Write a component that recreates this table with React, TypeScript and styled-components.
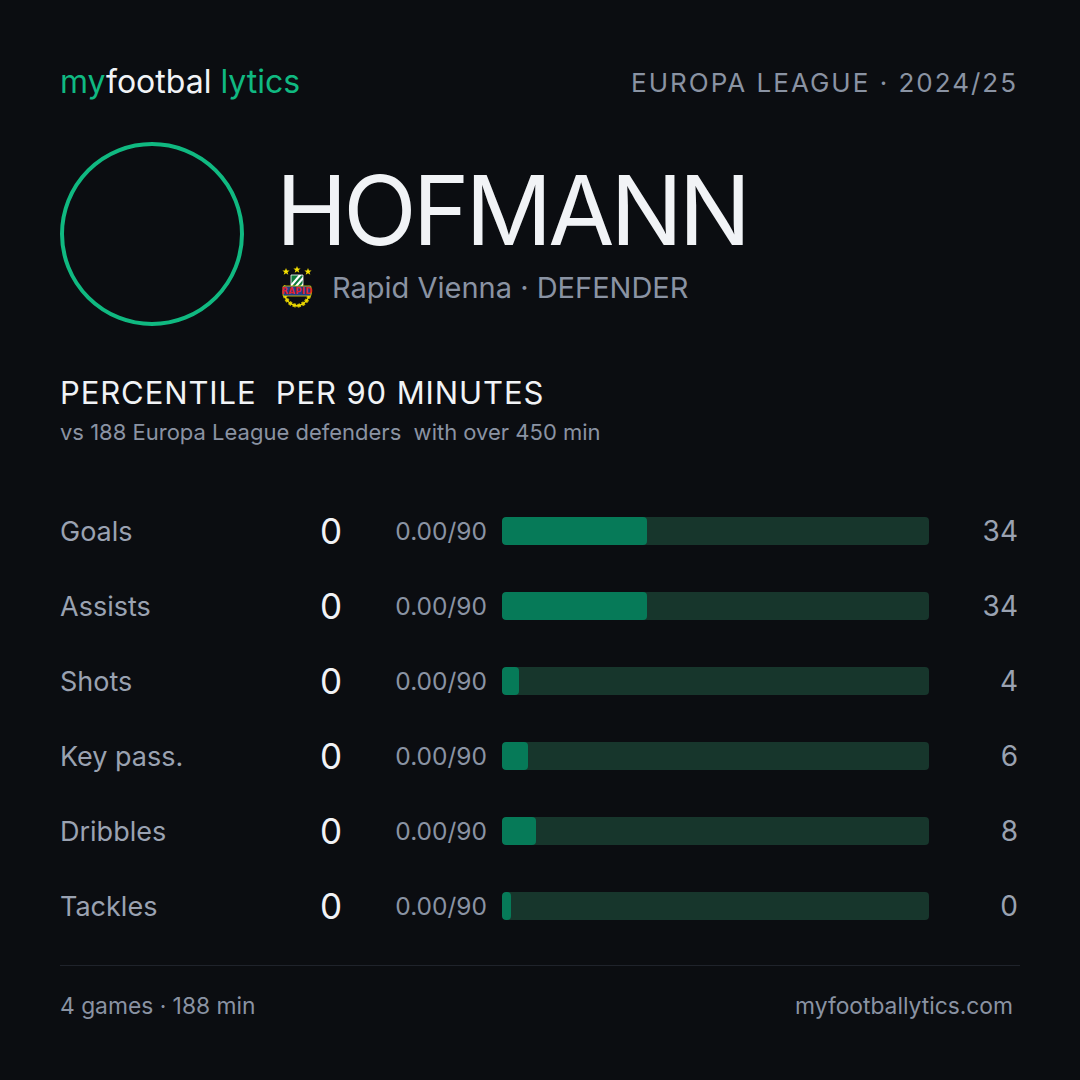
import React from "react";
import styled, { createGlobalStyle } from "styled-components";

const GlobalStyle = createGlobalStyle`
  html, body { margin: 0; padding: 0; background: #0b0d11; }
  body { font-family: Inter, "Noto Sans", sans-serif; }
  * { box-sizing: border-box; }
`;

const Page = styled.div`
  width: 1080px;
  height: 1080px;
  background: #0b0d11;
  padding: 64px 60px 0 60px;
  display: flex;
  flex-direction: column;
  color: #f1f3f6;
`;

const Header = styled.header`
  display: flex;
  justify-content: space-between;
  align-items: center;
  height: 36px;
`;

const Logo = styled.div`
  font-size: 32px;
  letter-spacing: 0;
  line-height: 36px;
  color: #f1f3f6;
`;

const Green = styled.span`
  color: #10b981;
`;

const Competition = styled.div`
  font-size: 26px;
  letter-spacing: 2px;
  color: #8a93a3;
  padding-right: 2px;
`;

const Hero = styled.section`
  display: flex;
  align-items: center;
  gap: 32px;
  margin-top: 42px;
`;

const Avatar = styled.div`
  width: 184px;
  height: 184px;
  border-radius: 50%;
  border: 4px solid #10b981;
  flex-shrink: 0;
`;

const HeroText = styled.div`
  display: flex;
  flex-direction: column;
`;

const Name = styled.h1`
  margin: 0;
  font-size: 96px;
  font-weight: 400;
  letter-spacing: -4px;
  line-height: 100px;
  color: #f1f3f6;
`;

const Club = styled.div`
  display: flex;
  align-items: center;
  gap: 18px;
  margin-top: 6px;
  font-size: 29px;
  color: #8a93a3;
  padding-left: 4px;
`;

const SectionTitle = styled.h2`
  margin: 49px 0 0 0;
  font-size: 31px;
  font-weight: 400;
  letter-spacing: 0.9px;
  color: #f1f3f6;
  line-height: 36px;
`;

const SubTitle = styled.div`
  margin-top: 7px;
  font-size: 22px;
  color: #8a93a3;
  line-height: 28px;
`;

const Rows = styled.div`
  display: flex;
  flex-direction: column;
  gap: 47px;
  margin-top: 64px;
`;

const Row = styled.div`
  display: grid;
  grid-template-columns: 200px 82px 160px 427px 1fr;
  align-items: center;
  height: 28px;
`;

const Label = styled.div`
  font-size: 27px;
  color: #9aa2b1;
`;

const Value = styled.div`
  font-size: 35px;
  color: #f1f3f6;
  text-align: right;
`;

const Rate = styled.div`
  font-size: 24.5px;
  color: #8a93a3;
  text-align: right;
  padding-right: 15px;
`;

const Track = styled.div`
  height: 28px;
  border-radius: 4px;
  background: #17362c;
  overflow: hidden;
  display: flex;
`;

const Fill = styled.div`
  height: 100%;
  border-radius: 4px;
  background: #067a58;
`;

const Pct = styled.div`
  font-size: 28px;
  color: #9aa2b1;
  text-align: right;
  padding-right: 2px;
`;

const Divider = styled.hr`
  margin: 52px 0 0 0;
  border: none;
  height: 1px;
  background: #1f232b;
`;

const Footer = styled.footer`
  display: flex;
  justify-content: space-between;
  align-items: center;
  margin-top: 26px;
  font-size: 22.8px;
  color: #8a93a3;
  padding-right: 7px;
`;

const Badge = () => (
  <svg width="34" height="42" viewBox="0 0 34 42">
    <g fill="#f5e000">
      <polygon points="6,2 7,4.6 9.6,4.6 7.5,6.2 8.3,8.8 6,7.2 3.7,8.8 4.5,6.2 2.4,4.6 5,4.6" />
      <polygon points="17,0 18,2.6 20.6,2.6 18.5,4.2 19.3,6.8 17,5.2 14.7,6.8 15.5,4.2 13.4,2.6 16,2.6" />
      <polygon points="28,2 29,4.6 31.6,4.6 29.5,6.2 30.3,8.8 28,7.2 25.7,8.8 26.5,6.2 24.4,4.6 27,4.6" />
    </g>
    <path d="M6 20 C2 28 6 38 17 40 C28 38 32 28 28 20" fill="none" stroke="#c9b800" strokeWidth="4" strokeDasharray="3 1.5" />
    <path d="M6 20 C2 28 6 38 17 40 C28 38 32 28 28 20" fill="none" stroke="#f5e000" strokeWidth="1.5" />
    <defs>
      <clipPath id="shield">
        <path d="M11 9 H23 V18 C23 22 20 24 17 25 C14 24 11 22 11 18 Z" />
      </clipPath>
    </defs>
    <g clipPath="url(#shield)">
      <rect x="10" y="8" width="14" height="18" fill="#0f7a3a" />
      <path d="M9 22 L21 8 M12 25 L24 11 M15 28 L27 14" stroke="#ffffff" strokeWidth="2.2" />
    </g>
    <path d="M11 9 H23 V18 C23 22 20 24 17 25 C14 24 11 22 11 18 Z" fill="none" stroke="#ffffff" strokeWidth="0.8" />
    <rect x="3" y="20" width="28" height="10" rx="1" fill="#1f3e8c" stroke="#e8d600" strokeWidth="0.8" />
    <text x="17" y="28.2" textAnchor="middle" fontSize="8.5" fontWeight="700" fill="#e0232b" fontFamily="DejaVu Sans, sans-serif" letterSpacing="0.3">RAPID</text>
  </svg>
);

type Stat = { label: string; value: string; rate: string; pct: number };

const stats: Stat[] = [
  { label: "Goals", value: "0", rate: "0.00/90", pct: 34 },
  { label: "Assists", value: "0", rate: "0.00/90", pct: 34 },
  { label: "Shots", value: "0", rate: "0.00/90", pct: 4 },
  { label: "Key pass.", value: "0", rate: "0.00/90", pct: 6 },
  { label: "Dribbles", value: "0", rate: "0.00/90", pct: 8 },
  { label: "Tackles", value: "0", rate: "0.00/90", pct: 0 },
];

export default function App() {
  return (
    <>
      <GlobalStyle />
      <Page>
        <Header>
          <Logo>
            <Green>my</Green>footbal <Green>lytics</Green>
          </Logo>
          <Competition>EUROPA LEAGUE · 2024/25</Competition>
        </Header>
        <Hero>
          <Avatar />
          <HeroText>
            <Name>HOFMANN</Name>
            <Club>
              <Badge />
              <span>Rapid Vienna · DEFENDER</span>
            </Club>
          </HeroText>
        </Hero>
        <SectionTitle>PERCENTILE&nbsp; PER 90 MINUTES</SectionTitle>
        <SubTitle>vs 188 Europa League defenders&nbsp; with over 450 min</SubTitle>
        <Rows>
          {stats.map((s) => (
            <Row key={s.label}>
              <Label>{s.label}</Label>
              <Value>{s.value}</Value>
              <Rate>{s.rate}</Rate>
              <Track>
                <Fill style={{ width: `${Math.max(s.pct, 2)}%` }} />
              </Track>
              <Pct>{s.pct}</Pct>
            </Row>
          ))}
        </Rows>
        <Divider />
        <Footer>
          <span>4 games · 188 min</span>
          <span>myfootballytics.com</span>
        </Footer>
      </Page>
    </>
  );
}
